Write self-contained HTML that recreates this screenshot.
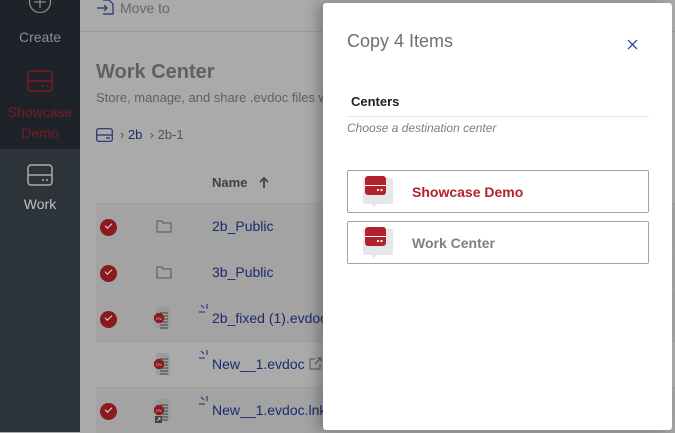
<!DOCTYPE html>
<html><head><meta charset="utf-8"><style>
*{margin:0;padding:0;box-sizing:border-box}
body{width:675px;height:432px;overflow:hidden;position:relative;background:#aaaaaa;font-family:"Liberation Sans",sans-serif}
.side{position:absolute;left:0;top:0;width:80px;height:432px;background:#1d2329}
.si{position:absolute;left:0;width:80px;text-align:center;font-size:14px}
.main{position:absolute;left:80px;top:0;width:595px;height:432px;background:#aaaaaa}
.row{position:absolute;left:16px;width:580px;height:46px;border-top:1px solid #9e9e9e}
.chk{position:absolute;left:4px;top:15px;width:17px;height:17px;border-radius:50%;background:#8b1a1f}
.chk:after{content:"";position:absolute;left:5px;top:4px;width:6px;height:3px;border-left:1.5px solid #ddd;border-bottom:1.5px solid #ddd;transform:rotate(-45deg)}
.nm{position:absolute;left:116px;top:14px;font-size:14px;color:#1c2a6e}
.panel{position:absolute;left:323px;top:3px;width:349px;height:427px;background:#fff;border-radius:3px;box-shadow:-6px 0 12px rgba(0,0,0,.25)}
.btn{position:absolute;left:24px;width:302px;height:43px;border:1px solid #a0a4a8;border-radius:2px}
.bi{position:absolute;left:15px;top:5px}
.bt{position:absolute;left:64px;top:13px;font-size:14px;font-weight:bold}
</style></head><body>
<svg width="0" height="0" style="position:absolute"><defs>
<g id="doc"><path d="M6 1h11l3 3v19H6z" fill="#9a9a9a"/><path d="M10 7h8M10 10h8M10 13h8M10 16h8M10 19h8M10 22h8" stroke="#444" stroke-width="1"/><path d="M4 10l3-3h4l3 3v4l-3 3H7l-3-3z" fill="#8b1a1f"/><text x="9" y="14" font-size="4" fill="#ddd" text-anchor="middle" font-family="Liberation Sans">DV</text></g>
<g id="srv"><path d="M2 2h26a2 2 0 0 1 2 2v22a2 2 0 0 1-2 2H14l-4 4v-4H2a2 2 0 0 1-2-2V4a2 2 0 0 1 2-2z" fill="#e6e7e8"/><rect x="2" y="0" width="21" height="19" rx="3" fill="#b2222c"/><path d="M2 9.5h21" stroke="#fff" stroke-width="1"/><circle cx="15" cy="14" r="1.1" fill="#fff"/><circle cx="18.5" cy="14" r="1.1" fill="#fff"/></g>
</defs></svg>
<div class="side">
 <div class="si" style="top:-10px"><svg width="24" height="24" viewBox="0 0 24 24"><circle cx="12" cy="12" r="10.5" fill="none" stroke="#888" stroke-width="1.3"/><path d="M12 6v12M6 12h12" stroke="#888" stroke-width="1.3"/></svg></div>
 <div class="si" style="top:29px;color:#8a8f94">Create</div>
 <div class="si" style="top:70px"><svg width="26" height="22" viewBox="0 0 26 22"><rect x="1" y="1" width="24" height="20" rx="3" fill="none" stroke="#7a1c22" stroke-width="1.5"/><path d="M1 11h24M15 16h2M19 16h2" stroke="#7a1c22" stroke-width="1.5"/></svg></div>
 <div class="si" style="top:102px;color:#7a1c22;line-height:21px">Showcase<br>Demo</div>
 <div style="position:absolute;top:149px;left:0;width:80px;height:283px;background:#2c3339"></div>
 <div class="si" style="top:164px"><svg width="26" height="22" viewBox="0 0 26 22"><rect x="1" y="1" width="24" height="20" rx="3" fill="none" stroke="#aaa" stroke-width="1.5"/><path d="M1 11h24M15 16h2M19 16h2" stroke="#aaa" stroke-width="1.5"/></svg></div>
 <div class="si" style="top:196px;color:#bfc3c6">Work</div>
</div>
<div class="main">
 <svg style="position:absolute;left:17px;top:-1px" width="18" height="16" viewBox="0 0 18 16"><path d="M6 1h6l4 4v10H6" fill="none" stroke="#26306e" stroke-width="1.2"/><path d="M0 9h10M7 6l3 3-3 3" fill="none" stroke="#26306e" stroke-width="1.2"/></svg>
 <div style="position:absolute;left:40px;top:0;font-size:14px;color:#666">Move to</div>
 <div style="position:absolute;left:0;top:31px;width:595px;height:1px;background:#999"></div>
 <div style="position:absolute;left:16px;top:61px;font-size:20px;font-weight:bold;color:#5e6163">Work Center</div>
 <div style="position:absolute;left:16px;top:90px;font-size:13px;color:#5e6163;white-space:nowrap">Store, manage, and share .evdoc files w</div>
 <svg style="position:absolute;left:16px;top:128px" width="17" height="14" viewBox="0 0 17 14"><rect x=".7" y=".7" width="15.6" height="12.6" rx="2" fill="none" stroke="#26306e" stroke-width="1.2"/><path d="M1 7h15M10 10h4" stroke="#26306e" stroke-width="1.2"/></svg>
 <div style="position:absolute;left:40px;top:127px;font-size:13px;color:#555">›&nbsp;<span style="color:#1c2a6e">2b</span>&nbsp;&nbsp;›&nbsp;2b-1</div>
 <div style="position:absolute;left:132px;top:175px;font-size:13px;font-weight:bold;color:#3e4244">Name</div>
 <svg style="position:absolute;left:179px;top:176px" width="10" height="13" viewBox="0 0 10 13"><path d="M5 12V2M1 6l4-4 4 4" fill="none" stroke="#3e4244" stroke-width="1.8"/></svg>
 <div class="row" style="top:203px;background:#a3a3a3"><div class="chk"></div><svg style="position:absolute;left:60px;top:15px" width="16" height="14" viewBox="0 0 16 14"><path d="M1 2h5l1 2h8v9H1z" fill="none" stroke="#555" stroke-width="1"/></svg><div class="nm">2b_Public</div></div>
 <div class="row" style="top:249px;background:#a3a3a3"><div class="chk"></div><svg style="position:absolute;left:60px;top:15px" width="16" height="14" viewBox="0 0 16 14"><path d="M1 2h5l1 2h8v9H1z" fill="none" stroke="#555" stroke-width="1"/></svg><div class="nm">3b_Public</div></div>
 <div class="row" style="top:295px;background:#a3a3a3"><div class="chk"></div><svg style="position:absolute;left:54px;top:10px" width="24" height="26"><use href="#doc"/></svg><svg style="position:absolute;left:102px;top:8px" width="12" height="10"><path d="M3 1l3 3M9 0v5M1 8h6" stroke="#1c2a6e" stroke-width="1"/></svg><div class="nm">2b_fixed (1).evdoc</div></div>
 <div class="row" style="top:341px;background:#aaaaaa"><svg style="position:absolute;left:54px;top:10px" width="24" height="26"><use href="#doc"/></svg><svg style="position:absolute;left:102px;top:8px" width="12" height="10"><path d="M3 1l3 3M9 0v5M1 8h6" stroke="#1c2a6e" stroke-width="1"/></svg><div class="nm">New__1.evdoc</div><svg style="position:absolute;left:213px;top:15px" width="13" height="13" viewBox="0 0 13 13"><path d="M6 2H1v10h10V7M8 1h4v4M12 1L6 7" fill="none" stroke="#555" stroke-width="1"/></svg></div>
 <div class="row" style="top:387px;background:#a3a3a3"><div class="chk"></div><svg style="position:absolute;left:54px;top:10px" width="24" height="26"><use href="#doc"/><rect x="5" y="18" width="7" height="7" fill="#444"/><path d="M7 23l3-3M8 20h2v2" stroke="#ccc" stroke-width=".8" fill="none"/></svg><svg style="position:absolute;left:102px;top:8px" width="12" height="10"><path d="M3 1l3 3M9 0v5M1 8h6" stroke="#1c2a6e" stroke-width="1"/></svg><div class="nm">New__1.evdoc.lnk</div></div>
</div>
<div class="panel">
 <div style="position:absolute;left:24px;top:28px;font-size:18px;color:#6b7075">Copy 4 Items</div>
 <svg style="position:absolute;left:304px;top:36px" width="11" height="11" viewBox="0 0 11 11"><path d="M1 1l9 9M10 1l-9 9" stroke="#2a3aa0" stroke-width="1.2"/></svg>
 <div style="position:absolute;left:28px;top:91px;font-size:13px;font-weight:bold;color:#222">Centers</div>
 <div style="position:absolute;left:24px;top:113px;width:302px;height:1px;background:#e3e3e3"></div>
 <div style="position:absolute;left:24px;top:118px;font-size:12px;font-style:italic;color:#7a7e82">Choose a destination center</div>
 <div class="btn" style="top:167px"><svg class="bi" width="32" height="33"><use href="#srv"/></svg><div class="bt" style="color:#b2222c">Showcase Demo</div></div>
 <div class="btn" style="top:218px"><svg class="bi" width="32" height="33"><use href="#srv"/></svg><div class="bt" style="color:#7d8185">Work Center</div></div>
</div>
</body></html>
